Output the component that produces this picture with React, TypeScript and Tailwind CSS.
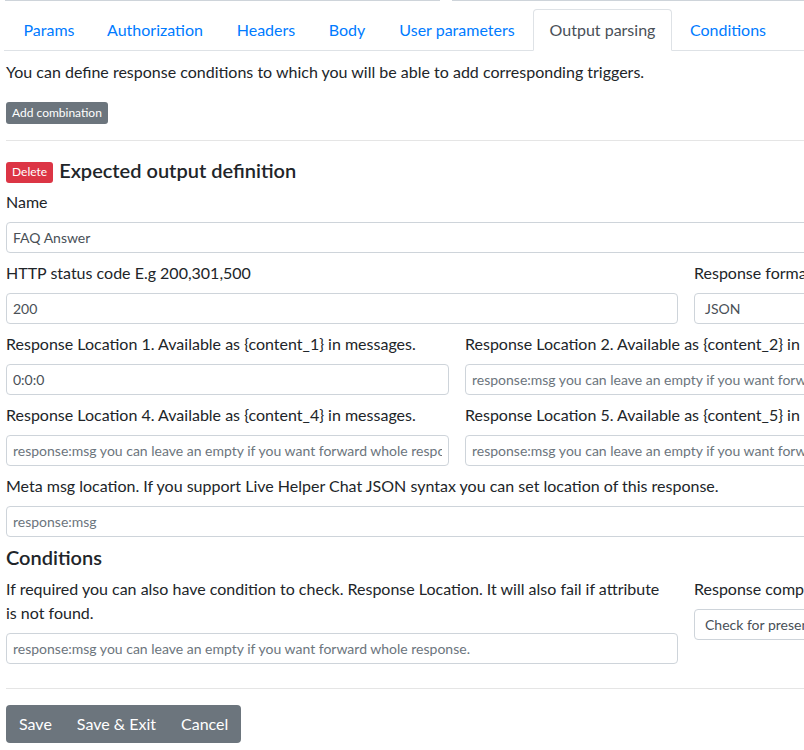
import React from "react";

const tabs = [
  { label: "Params", w: "w-[80px]" },
  { label: "Authorization", w: "w-[128px]" },
  { label: "Headers", w: "w-[90px]" },
  { label: "Body", w: "w-[68px]" },
  { label: "User parameters", w: "w-[148px]" },
  { label: "Output parsing", w: "w-[139px]", active: true },
  { label: "Conditions", w: "w-[108px]" },
];

const PH = "response:msg you can leave an empty if you want forward whole response.";

function Field({ value, placeholder, className = "" }: { value?: string; placeholder?: string; className?: string }) {
  return (
    <input
      readOnly
      value={value ?? ""}
      placeholder={placeholder}
      className={`mt-[8px] block h-[31px] w-full rounded-[4px] border border-[#ced4da] bg-white px-[6px] text-[14px] text-[#495057] outline-none placeholder:text-[#6c757d] ${className}`}
    />
  );
}

function Label({ children }: { children: React.ReactNode }) {
  return <div className="block whitespace-nowrap leading-6">{children}</div>;
}

export default function App() {
  return (
    <div className="h-[750px] w-[804px] overflow-hidden bg-white font-['Lato',sans-serif] text-[16px] leading-6 text-[#212529]">
      <div className="flex gap-[12px] pl-[5px]">
        <div className="h-px w-[435px] bg-[#ced4da]" />
        <div className="h-px flex-1 bg-[#ced4da]" />
      </div>

      <div className="ml-[4px] mt-[8px] flex w-[1000px] gap-[2px] border-b border-[#dee2e6] pl-[5px]">
        {tabs.map((t) => (
          <div
            key={t.label}
            className={`-mb-px flex h-[42px] shrink-0 items-center justify-center rounded-t-[4px] border ${t.w} ${
              t.active
                ? "border-[#dee2e6] border-b-white bg-white text-[#495057]"
                : "border-transparent text-[#007bff]"
            }`}
          >
            {t.label}
          </div>
        ))}
      </div>

      <div className="w-[1400px] pl-[6px]">
        <p className="mt-[9px] leading-6">
          You can define response conditions to which you will be able to add corresponding triggers.
        </p>
        <div className="mt-[18px] flex">
          <button className="h-[22px] rounded-[3px] bg-[#6c757d] px-[6px] text-[12px] leading-[22px] text-white">
            Add combination
          </button>
        </div>
        <div className="mt-[16px] h-px w-full bg-[#e5e5e5]" />

        <div className="mt-[20px] flex h-[22px] items-center gap-[6px]">
          <span className="flex h-[21px] items-center rounded-[3px] bg-[#dc3545] px-[6px] text-[12px] text-white">
            Delete
          </span>
          <span className="mb-[5px] text-[20px] font-semibold leading-6">Expected output definition</span>
        </div>

        <div className="mt-[7px]">
          <Label>Name</Label>
          <Field value="FAQ Answer" />
        </div>

        <div className="mt-[8px] flex gap-[16px]">
          <div className="w-[672px] shrink-0">
            <Label>HTTP status code E.g 200,301,500</Label>
            <Field value="200" />
          </div>
          <div className="w-[328px] shrink-0">
            <Label>Response format</Label>
            <div className="mt-[8px] flex h-[31px] items-center rounded-[4px] border border-[#ced4da] px-[10px] text-[14px] text-[#495057]">
              JSON
            </div>
          </div>
        </div>

        <div className="mt-[8px] flex gap-[16px]">
          {[1, 2, 3].map((n) => (
            <div key={n} className="w-[443px] shrink-0">
              <Label>Response Location {n}. Available as {`{content_${n}}`} in messages.</Label>
              {n === 1 ? <Field value="0:0:0" /> : <Field placeholder={PH} />}
            </div>
          ))}
        </div>

        <div className="mt-[8px] flex gap-[16px]">
          {[4, 5, 6].map((n) => (
            <div key={n} className="w-[443px] shrink-0">
              <Label>Response Location {n}. Available as {`{content_${n}}`} in messages.</Label>
              <Field placeholder={PH} />
            </div>
          ))}
        </div>

        <div className="mt-[8px]">
          <Label>Meta msg location. If you support Live Helper Chat JSON syntax you can set location of this response.</Label>
          <Field placeholder="response:msg" />
        </div>

        <h4 className="mt-[8px] text-[20px] font-semibold leading-6">Conditions</h4>

        <div className="mt-[8px] flex gap-[16px]">
          <div className="w-[672px] shrink-0">
            <p className="leading-6">
              If required you can also have condition to check. Response Location. It will also fail if attribute
              <br />
              is not found.
            </p>
            <Field placeholder={PH} />
          </div>
          <div className="w-[328px] shrink-0">
            <Label>Response compare</Label>
            <div className="mt-[8px] flex h-[31px] items-center whitespace-nowrap rounded-[4px] border border-[#ced4da] px-[10px] text-[14px] text-[#495057]">
              Check for presence of variable
            </div>
          </div>
        </div>

        <div className="mt-[24px] h-px w-full bg-[#e5e5e5]" />

        <div className="mt-[16px] flex">
          <div className="flex h-[38px] overflow-hidden rounded-[4px] bg-[#6c757d] text-white">
            <button className="px-[13px]">Save</button>
            <button className="px-[12px]">Save &amp; Exit</button>
            <button className="px-[13px]">Cancel</button>
          </div>
        </div>
      </div>
    </div>
  );
}
